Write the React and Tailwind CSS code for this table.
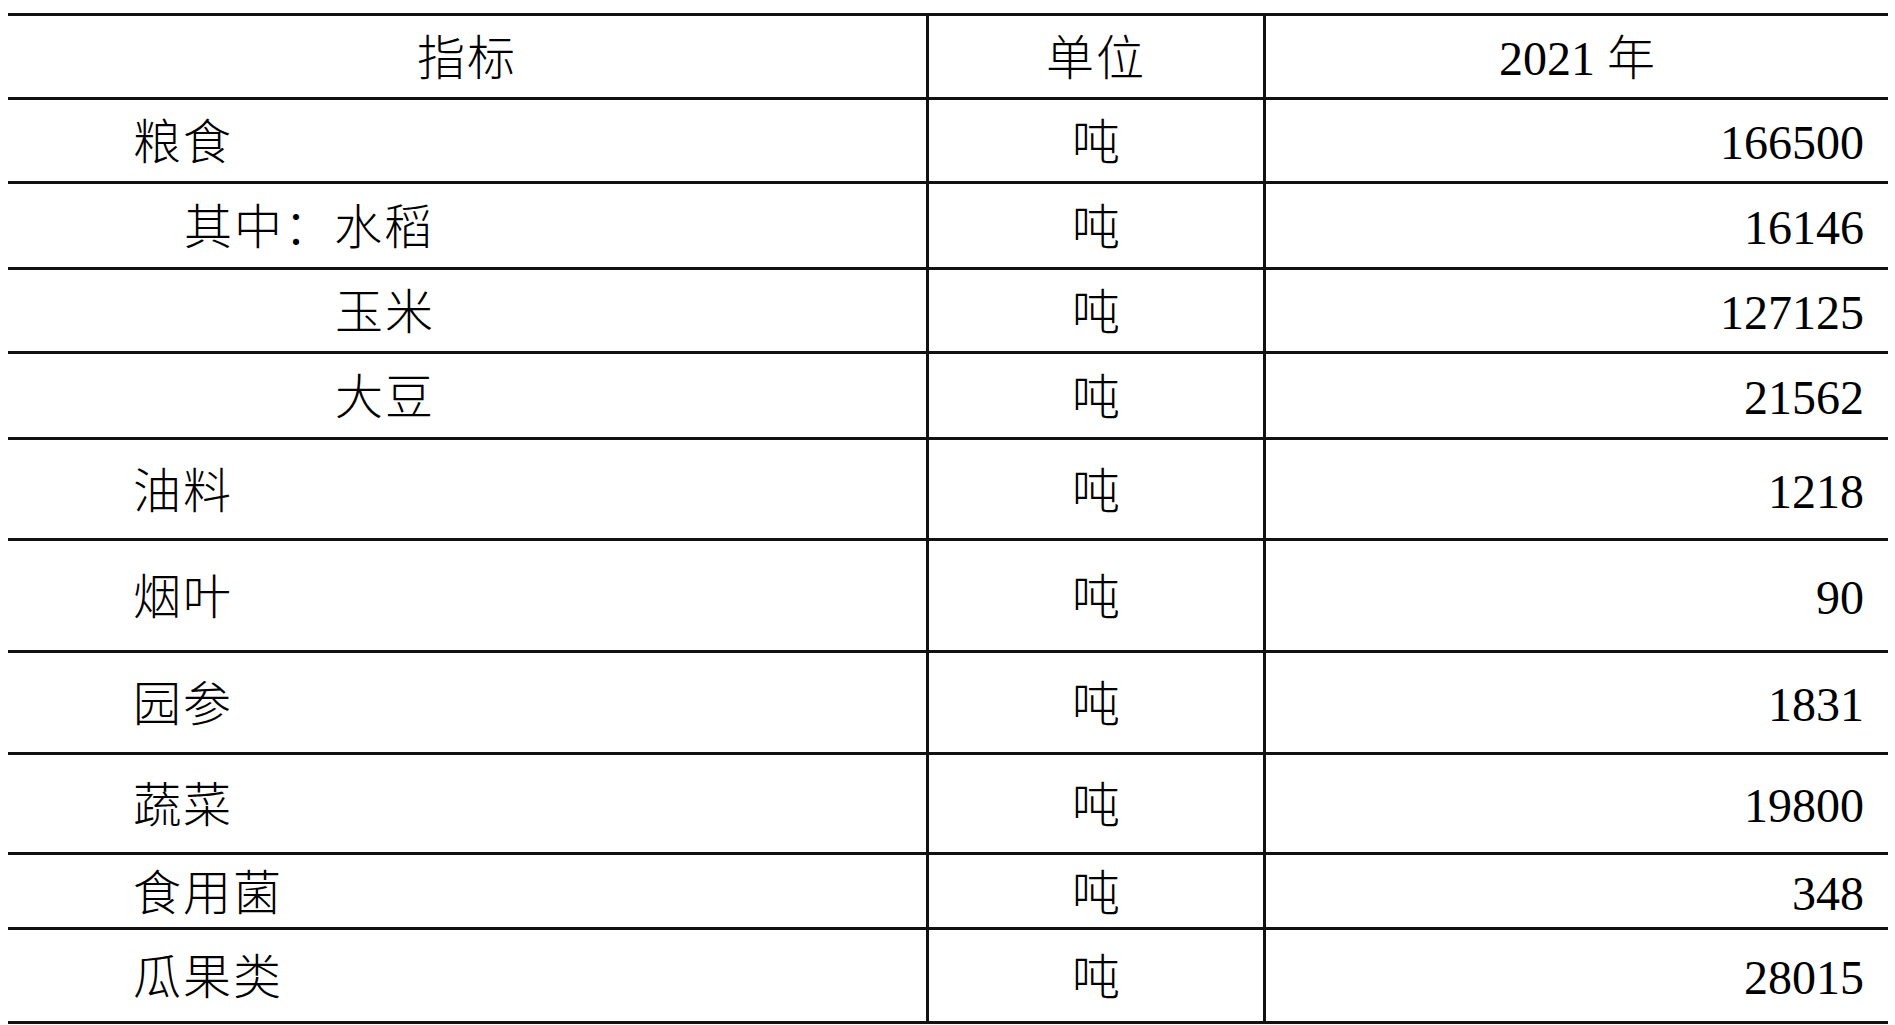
const rows = [
  { name: "粮食", indent: "pl-[125px]", value: "166500", h: "h-[84px]" },
  { name: "其中：水稻", indent: "pl-[176px]", value: "16146", h: "h-[86px]" },
  { name: "玉米", indent: "pl-[327px]", value: "127125", h: "h-[84px]" },
  { name: "大豆", indent: "pl-[327px]", value: "21562", h: "h-[86px]" },
  { name: "油料", indent: "pl-[125px]", value: "1218", h: "h-[101px]" },
  { name: "烟叶", indent: "pl-[125px]", value: "90", h: "h-[112px]" },
  { name: "园参", indent: "pl-[125px]", value: "1831", h: "h-[102px]" },
  { name: "蔬菜", indent: "pl-[125px]", value: "19800", h: "h-[100px]" },
  { name: "食用菌", indent: "pl-[125px]", value: "348", h: "h-[75px]" },
  { name: "瓜果类", indent: "pl-[125px]", value: "28015", h: "h-[97px] border-b-[3px]" },
];

export default function App() {
  return (
    <div
      className="w-[1895px] h-[1025px] bg-white text-black text-[48px] leading-none font-light pt-[13px] pl-[8px] overflow-hidden"
      style={{ fontFamily: '"Liberation Serif", "Noto Sans CJK SC", serif' }}
    >
      <div className="w-[1880px]">
        {/* Header */}
        <div className="grid grid-cols-[918px_337px_625px] h-[84px] border-t-[3px] border-[#111]">
          <div className="flex items-center justify-center pt-[5px] tracking-[2px]">指标</div>
          <div className="flex items-center justify-center pt-[5px] tracking-[2px] border-l-[3px] border-[#111]">
            单位
          </div>
          <div className="flex items-center justify-center pt-[5px] border-l-[3px] border-[#111]">
            2021 年
          </div>
        </div>

        {rows.map((r) => (
          <div
            key={r.name}
            className={`grid grid-cols-[918px_337px_625px] border-t-[3px] border-[#111] ${r.h}`}
          >
            <div className={`flex items-center pt-[5px] tracking-[2px] ${r.indent}`}>{r.name}</div>
            <div className="flex items-center justify-center pt-[5px] border-l-[3px] border-[#111]">吨</div>
            <div className="flex items-center justify-end pt-[5px] pr-[24px] border-l-[3px] border-[#111]">
              {r.value}
            </div>
          </div>
        ))}
      </div>
    </div>
  );
}
